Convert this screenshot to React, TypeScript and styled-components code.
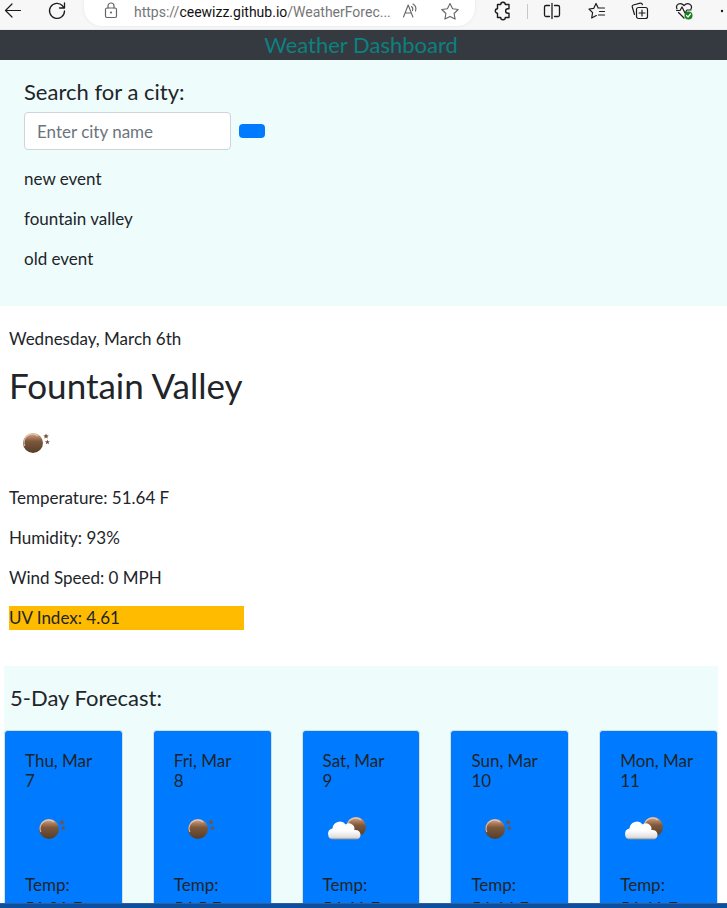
import React from 'react';
import styled, { createGlobalStyle } from 'styled-components';

const ink = '#212529';
const mist = '#effcfc';
const blue = '#007bff';

const GlobalStyle = createGlobalStyle`
  *, *::before, *::after { box-sizing: border-box; }
  body { margin: 0; background: #fff; color: ${ink}; font: 400 17px/24px Lato, sans-serif; }
  h1, h2, h3, p { margin: 0; font-weight: 400; }
`;

const Shell = styled.div`
  height: 100vh;
  display: flex;
  flex-direction: column;
  overflow: hidden;
`;
const Toolbar = styled.nav`
  flex: none;
  height: 30px;
  overflow: hidden;
  display: flex;
  align-items: flex-start;
  border-bottom: 1px solid #ebebeb;
  background: #f7f7f7;
  color: #1b1b1b;
`;
const ToolButton = styled.button<{ $width: number }>`
  flex: none;
  width: ${(p) => p.$width}px;
  height: 22px;
  padding: 0;
  border: 0;
  background: none;
  color: inherit;
  display: flex;
  align-items: center;
  justify-content: center;
`;
const AddressBar = styled.div`
  flex: 1;
  min-width: 0;
  height: 26px;
  margin: 0 8px 0 5px;
  padding: 0 9px 0 19px;
  display: flex;
  align-items: flex-start;
  border-radius: 0 0 18px 18px;
  background: #fff;
  color: #666;
  box-shadow: 0 0 3px #e2e2e2;
`;
const Address = styled.a`
  flex: 1;
  min-width: 0;
  margin-left: 15px;
  white-space: nowrap;
  font: normal 14px/24px Roboto, sans-serif;
  color: #767676;
  text-decoration: none;
  strong { font-weight: 400; color: #111; }
`;
const ToolDivider = styled.span`
  flex: none;
  width: 1px;
  height: 15px;
  margin: 4px 0 0 4px;
  background: #c8c8c8;
`;

const Page = styled.main`
  flex: 1;
  min-height: 0;
  overflow: hidden;
`;
const Banner = styled.header`
  height: 30px;
  padding-right: 5px;
  background: #343a40;
  color: #0d8080;
  text-align: center;
  h1 { font-size: 22px; line-height: 30px; }
`;
const SearchPanel = styled.section`
  padding: 20px 24px 35px;
  background: ${mist};
`;
const SearchLabel = styled.label`
  display: block;
  margin-bottom: 8px;
  font-size: 22px;
  line-height: 24px;
`;
const SearchRow = styled.form`
  display: flex;
  align-items: center;
  gap: 8px;
  margin-bottom: 17px;
`;
const CityInput = styled.input`
  width: 207px;
  height: 38px;
  padding: 6px 12px;
  border: 1px solid #ced4da;
  border-radius: 4px;
  background: #fff;
  color: #495057;
  font: inherit;
  &::placeholder { color: #6c757d; opacity: 1; }
`;
const SearchButton = styled.button`
  width: 26px;
  height: 14px;
  border: 0;
  border-radius: 4px;
  background: ${blue};
`;
const Stack = styled.div`
  display: flex;
  flex-direction: column;
  gap: 16px;
`;
const Current = styled.section`
  width: 244px;
  padding: 21px 0 36px 9px;
`;
const City = styled.h2`
  margin: 10px 0 9px;
  white-space: nowrap;
  font-size: 35px;
  line-height: 48px;
`;
const WeatherIcon = styled.svg`
  display: block;
  width: 50px;
  height: 50px;
`;
const Readings = styled(Stack)`
  margin-top: 18px;
`;
const UvIndex = styled.p`
  background: #ffbb00;
`;
const Forecast = styled.section`
  margin: 0 9px 0 4px;
  background: ${mist};
`;
const ForecastTitle = styled.h2`
  padding: 20px 6px;
  font-size: 22px;
  line-height: 24px;
`;
const Days = styled.div`
  display: grid;
  grid-template-columns: repeat(5, minmax(0, 1fr));
  column-gap: 30px;
`;
const DayCard = styled.article`
  min-height: 260px;
  padding: 20px;
  border: 1px solid #d2dfe3;
  border-radius: 3px;
  background: ${blue};
  background-clip: padding-box;
  h3 { margin-bottom: 13px; font-size: 17px; line-height: 20px; }
  h3 span, p span { display: block; }
  p { margin-top: 19px; }
`;
const Taskbar = styled.footer`
  flex: none;
  height: 5px;
  background: #0d4f9f;
  border-top: 1px solid #315f96;
`;

function Sky({ kind, id }: { kind: 'clear' | 'cloudy'; id: string }) {
  const clear = kind === 'clear';
  const cx = clear ? 24 : 33;
  const cy = clear ? 25 : 23;
  return (
    <WeatherIcon viewBox="0 0 50 50" role="img" aria-label={clear ? 'Clear night' : 'Few clouds'}>
      <defs>
        <linearGradient id={`${id}-moon`} x1="0" y1="0" x2="0" y2="1">
          <stop offset="0" stopColor="#d9b8a0" />
          <stop offset=".2" stopColor="#b08060" />
          <stop offset=".42" stopColor="#7c583c" />
          <stop offset="1" stopColor="#553d28" />
        </linearGradient>
        <linearGradient id={`${id}-cloud`} x1="0" y1="0" x2="0" y2="1">
          <stop offset=".5" stopColor="#fff" />
          <stop offset=".88" stopColor="#dedede" />
          <stop offset="1" stopColor="#858b91" />
        </linearGradient>
      </defs>
      <circle cx={cx} cy={cy} r="10" fill={`url(#${id}-moon)`} />
      <path d={`M${cx - 8.2} ${cy + 3}A8.5 8.5 0 0 1 ${cx + 5} ${cy - 7}`} fill="none" stroke="#f0d4c4" strokeWidth="1.3" opacity=".75" />
      {clear ? (
        <g fill="#79513b">
          <path d="m37 15.500.8 1.700 2 .2-1.500 1.300.5 1.900-1.800-1-1.700 1 .5-1.900-1.500-1.300 1.900-.2z" />
          <path d="m38.400 21.600.7 1.600 1.800.1-1.400 1.200.5 1.700-1.600-.9-1.600.9.5-1.700-1.400-1.200 1.800-.1z" />
        </g>
      ) : (
        <path d="M10.500 35.500a5.500 5.500 0 0 1-1-10.900 7.400 7.400 0 0 1 13.200-4.200 5.500 5.500 0 0 1 8.600 5.700 4.800 4.800 0 1 1 2.700 9.400z" fill={`url(#${id}-cloud)`} />
      )}
    </WeatherIcon>
  );
}

const line = { fill: 'none', stroke: 'currentColor', strokeLinecap: 'round', strokeLinejoin: 'round' } as const;

const history = ['new event', 'fountain valley', 'old event'];
const days = [
  { date: 'Thu, Mar', day: 7, sky: 'clear', temp: '51.31 F' },
  { date: 'Fri, Mar', day: 8, sky: 'clear', temp: '54.5 F' },
  { date: 'Sat, Mar', day: 9, sky: 'cloudy', temp: '54.61 F' },
  { date: 'Sun, Mar', day: 10, sky: 'clear', temp: '56.64 F' },
  { date: 'Mon, Mar', day: 11, sky: 'cloudy', temp: '56.61 F' },
] as const;

export default function App() {
  return (
    <Shell>
      <GlobalStyle />
      <Toolbar aria-label="Browser toolbar">
        <ToolButton $width={36} aria-label="Back">
          <svg width="36" height="22" viewBox="0 0 36 22" {...line} strokeWidth="1.2"><path d="M20.500 10.500H5.500M12 4l-6.500 6.500L12 17" /></svg>
        </ToolButton>
        <ToolButton $width={43} aria-label="Refresh">
          <svg width="43" height="22" viewBox="0 0 43 22" {...line} strokeWidth="1.3"><path d="M28.500 11a7.500 7.500 0 1 1-2-5.200L28 8M28.500 3v5h-5" /></svg>
        </ToolButton>
        <AddressBar>
          <svg width="16" height="22" viewBox="0 0 16 22" {...line} strokeWidth="1.2"><rect x="2.5" y="8" width="11" height="9.5" rx="1.5" /><path d="M5 8V6a3 3 0 0 1 6 0v2" /><circle cx="8" cy="12.5" r=".5" fill="currentColor" /></svg>
          <Address href="https://ceewizz.github.io/WeatherForecast/">https://<strong>ceewizz.github.io</strong>/WeatherForec...</Address>
          <ToolButton $width={40} aria-label="Read aloud">
            <svg width="40" height="22" viewBox="0 0 40 22" {...line} strokeWidth="1.1"><path d="m13.500 17 4.700-12 4.700 12M15 13h6.400M21.500 6.500q2 1.500 1 4M23 4q4 2.500 2.500 7" /></svg>
          </ToolButton>
          <ToolButton $width={36} aria-label="Add to favorites">
            <svg width="36" height="22" viewBox="0 0 36 22" {...line} strokeWidth="1.1"><path d="m20 3.500 2.600 5.200 5.600.8-4.100 4 1 5.600-5.100-2.700-5.100 2.700 1-5.600-4.100-4 5.600-.8z" /></svg>
          </ToolButton>
        </AddressBar>
        <ToolButton $width={40} aria-label="Extensions">
          <svg width="20" height="22" viewBox="0 0 20 22" {...line} strokeWidth="1.4"><path d="M4.500 4.500h3.200a2.300 2.300 0 0 1 4.600 0H16v4.300h-1.200a2.200 2.200 0 0 0 0 4.400H16v4.300h-3.700a2.300 2.300 0 0 1-4.600 0H4.500v-4.300a2.200 2.200 0 1 1 0-4.400z" /></svg>
        </ToolButton>
        <ToolDivider />
        <ToolButton $width={48} aria-label="Split screen">
          <svg width="18" height="22" viewBox="0 0 18 22" {...line} strokeWidth="1.3"><path d="M6.500 5.500H3A1.500 1.500 0 0 0 1.500 7v8A1.500 1.500 0 0 0 3 16.500h3.500M11.500 5.500H15A1.500 1.500 0 0 1 16.500 7v8a1.500 1.500 0 0 1-1.500 1.500h-3.500M9 3.500v15" /></svg>
        </ToolButton>
        <ToolButton $width={41} aria-label="Favorites">
          <svg width="18" height="22" viewBox="0 0 18 22" {...line} strokeWidth="1.2"><path d="M10 7.500 8 3.500 5.800 8.300 1 9l3.600 3.600L3.700 18l4.600-2.500M10 8h6.500M11.500 11.500h5M10.500 15h6" /></svg>
        </ToolButton>
        <ToolButton $width={46} aria-label="Collections">
          <svg width="18" height="22" viewBox="0 0 18 22" {...line} strokeWidth="1.2"><rect x="5.5" y="7.5" width="11" height="11" rx="2" /><path d="M11 10v6M8 13h6M3.500 14.500 1.300 7A1.500 1.500 0 0 1 2.300 5l7-1.800a1.500 1.500 0 0 1 2 1.500" /></svg>
        </ToolButton>
        <ToolButton $width={42} aria-label="Browser essentials">
          <svg width="19" height="22" viewBox="0 0 19 22" {...line} strokeWidth="1.2"><path d="M2 9C0 4.500 5.500 1.500 9 5.500 13 1.500 18 5 16 9M1.500 10.500h3.500L7 7l3 6 2-3h4M3.500 12.500 9 18" /><circle cx="13.5" cy="15.5" r="4" fill="#16801c" stroke="none" /><path d="m11.500 15.500 1.500 1.500 2.500-3" stroke="#fff" /></svg>
        </ToolButton>
        <ToolButton $width={22} aria-label="Settings and more">
          <svg width="22" height="22" viewBox="0 0 22 22" fill="currentColor"><circle cx="17" cy="11" r="1.2" /></svg>
        </ToolButton>
      </Toolbar>
      <Page>
        <Banner><h1>Weather Dashboard</h1></Banner>
        <SearchPanel>
          <SearchLabel htmlFor="city">Search for a city:</SearchLabel>
          <SearchRow onSubmit={(e) => e.preventDefault()}>
            <CityInput id="city" placeholder="Enter city name" />
            <SearchButton aria-label="Search" />
          </SearchRow>
          <Stack>{history.map((h) => <p key={h}>{h}</p>)}</Stack>
        </SearchPanel>
        <Current>
          <p>Wednesday, March 6th</p>
          <City>Fountain Valley</City>
          <Sky kind="clear" id="now" />
          <Readings>
            <p>Temperature: 51.64 F</p>
            <p>Humidity: 93%</p>
            <p>Wind Speed: 0 MPH</p>
            <UvIndex>UV Index: 4.61</UvIndex>
          </Readings>
        </Current>
        <Forecast>
          <ForecastTitle>5-Day Forecast:</ForecastTitle>
          <Days>
            {days.map((d, i) => (
              <DayCard key={d.date}>
                <h3>{d.date} <span>{d.day}</span></h3>
                <Sky kind={d.sky} id={`day${i}`} />
                <p>Temp: <span>{d.temp}</span></p>
              </DayCard>
            ))}
          </Days>
        </Forecast>
      </Page>
      <Taskbar />
    </Shell>
  );
}
